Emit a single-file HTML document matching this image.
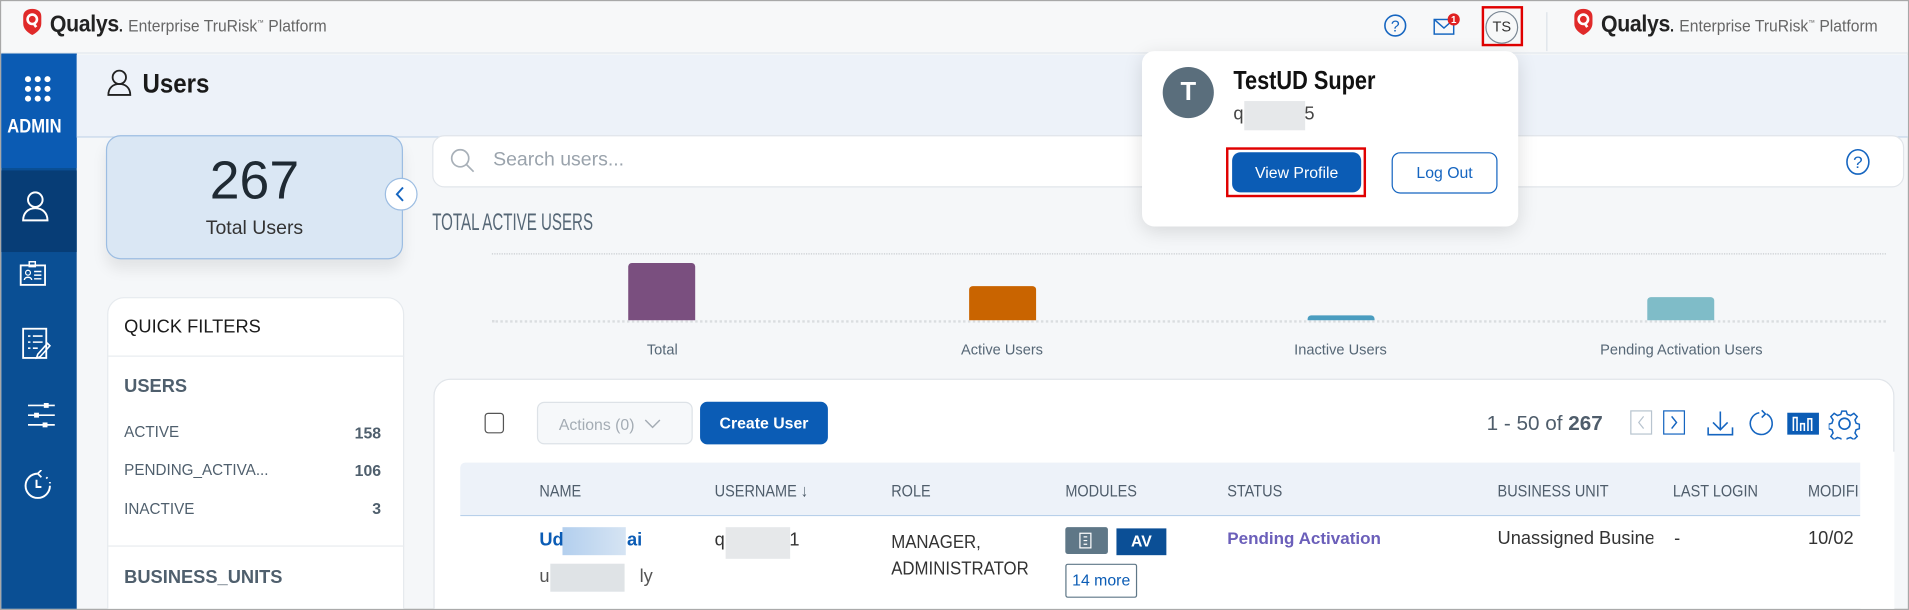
<!DOCTYPE html>
<html><head><meta charset="utf-8"><style>
*{box-sizing:border-box;margin:0;padding:0}
html,body{width:1909px;height:610px;overflow:hidden;background:#f5f7f9}
#s{position:absolute;left:0;top:0;width:1568px;height:501px;transform:scale(1.2175);transform-origin:0 0;font-family:"Liberation Sans",sans-serif;background:#f5f7f9;border:1px solid #a8a8a8;overflow:hidden}
.a{position:absolute}
.n{display:inline-block;transform:scaleX(.82);transform-origin:0 0;white-space:nowrap}
.logo span{font-weight:normal;font-size:14px;color:#666;letter-spacing:0}
.side svg{position:absolute}
.th{position:absolute;top:394px;font-size:14px;color:#4f5d6b}
</style></head><body><div id="s">
<!-- top bar -->
<div class="a" style="left:0;top:0;width:1568px;height:43px;background:#f7f8f9;border-bottom:1px solid #e3e8ee"></div>
<svg class="a" style="left:18px;top:6px" width="15" height="22" viewBox="0 0 14 20"><path d="M7 0C3 0 0 2 0 6v5c0 4 3 7 7 9 4-2 7-5 7-9V6c0-4-3-6-7-6z" fill="#e02a2a"/><circle cx="7" cy="8" r="3.6" fill="none" stroke="#fff" stroke-width="2"/><path d="M8 11l2 3" stroke="#fff" stroke-width="2"/></svg>
<div class="a logo" style="left:40px;top:9px"><span class="n" style="transform:scaleX(.92);font-size:19px;font-weight:bold;color:#222;letter-spacing:-.3px">Qualys<b style="font-size:13px">.</b> <span>Enterprise TruRisk<sup style="font-size:6px">™</sup> Platform</span></span></div>
<svg class="a" style="left:1135px;top:10px" width="20" height="20"><circle cx="10" cy="10" r="8.5" fill="none" stroke="#1565c0" stroke-width="1.3"/><text x="10" y="15" font-size="13" fill="#1565c0" text-anchor="middle" font-family="Liberation Sans">?</text></svg>
<svg class="a" style="left:1176px;top:9px" width="24" height="22"><rect x="1" y="6" width="16" height="12" fill="none" stroke="#1565c0" stroke-width="1.2"/><path d="M1 6l8 7 8-7" fill="none" stroke="#1565c0" stroke-width="1.2"/><circle cx="17" cy="6" r="5" fill="#e02020"/><text x="17" y="9" font-size="8" font-weight="bold" fill="#fff" text-anchor="middle" font-family="Liberation Sans">1</text></svg>
<div class="a" style="left:1216px;top:4px;width:34px;height:33px;border:2px solid #e00000"></div>
<div class="a" style="left:1219px;top:8px;width:27px;height:27px;border:1px solid #7a8794;border-radius:50%;font-size:12px;text-align:center;line-height:25px;color:#333">TS</div>
<div class="a" style="left:1269px;top:9px;width:1px;height:32px;background:#dde2e8"></div>
<svg class="a" style="left:1292px;top:6px" width="15" height="22" viewBox="0 0 14 20"><path d="M7 0C3 0 0 2 0 6v5c0 4 3 7 7 9 4-2 7-5 7-9V6c0-4-3-6-7-6z" fill="#e02a2a"/><circle cx="7" cy="8" r="3.6" fill="none" stroke="#fff" stroke-width="2"/><path d="M8 11l2 3" stroke="#fff" stroke-width="2"/></svg>
<div class="a logo" style="left:1314px;top:9px"><span class="n" style="transform:scaleX(.92);font-size:19px;font-weight:bold;color:#222;letter-spacing:-.3px">Qualys<b style="font-size:13px">.</b> <span>Enterprise TruRisk<sup style="font-size:6px">™</sup> Platform</span></span></div>
<!-- sidebar -->
<div class="a side" style="left:0;top:43px;width:62px;height:458px;background:#0a4f94">
 <div class="a" style="left:0;top:0;width:62px;height:94px;background:#0b5bb3"></div>
 <div class="a" style="left:0;top:96px;width:62px;height:67px;background:#073d76"></div>
 <svg style="left:19px;top:18px" width="22" height="22"><g fill="#fff"><circle cx="3" cy="3" r="2.5"/><circle cx="11" cy="3" r="2.5"/><circle cx="19" cy="3" r="2.5"/><circle cx="3" cy="11" r="2.5"/><circle cx="11" cy="11" r="2.5"/><circle cx="19" cy="11" r="2.5"/><circle cx="3" cy="19" r="2.5"/><circle cx="19" cy="19" r="2.5"/><circle cx="11" cy="19" r="2.5"/></g></svg>
 <div class="a" style="left:5px;top:52px;font-size:16px;font-weight:bold;color:#fff"><span class="n" style="transform:scaleX(.85)">ADMIN</span></div>
 <svg style="left:17px;top:113px" width="22" height="26"><circle cx="11" cy="7" r="6" fill="none" stroke="#fff" stroke-width="1.6"/><path d="M1 24c0-6 4-10 10-10s10 4 10 10z" fill="none" stroke="#fff" stroke-width="1.6"/></svg>
 <svg style="left:15px;top:170px" width="22" height="22"><rect x="1" y="4" width="20" height="16" fill="none" stroke="#fff" stroke-width="1.5"/><rect x="8" y="1" width="5" height="4" fill="none" stroke="#fff" stroke-width="1.2"/><circle cx="7" cy="10" r="2" fill="none" stroke="#fff"/><path d="M4 16c0-3 6-3 6 0M12 9h6M12 12h6M12 15h6" stroke="#fff" fill="none" stroke-width="1.2"/></svg>
 <svg style="left:17px;top:225px" width="24" height="28"><rect x="1" y="1" width="19" height="24" fill="none" stroke="#fff" stroke-width="1.5"/><path d="M5 7h2M9 7h8M5 12h2M9 12h8M5 17h2M9 17h4M13 22l8-9 2 2-8 9-3 1z" stroke="#fff" fill="none" stroke-width="1.3"/></svg>
 <svg style="left:17px;top:287px" width="28" height="22"><path d="M5 2h22M5 10h22M5 18h22" stroke="#fff" stroke-width="1.4"/><rect x="18" y="0" width="4" height="4" fill="#fff"/><rect x="10" y="8" width="4" height="4" fill="#fff"/><rect x="17" y="16" width="4" height="4" fill="#fff"/></svg>
 <svg style="left:17px;top:342px" width="26" height="26"><path d="M13 3a10 10 0 1 0 10 10" fill="none" stroke="#fff" stroke-width="1.6"/><path d="M13 3l3-3M13 3l3 3" stroke="#fff" stroke-width="1.4" fill="none"/><path d="M12 8v6h4" stroke="#fff" stroke-width="1.6" fill="none"/><path d="M20 6l1 1M23 10v1" stroke="#fff" stroke-width="1.6"/></svg>
</div>
<!-- header band -->
<div class="a" style="left:62px;top:44px;width:1506px;height:68px;background:#edf2f9;border-bottom:1px solid #c6d7ea"></div>
<svg class="a" style="left:87px;top:56px" width="20" height="22"><circle cx="10" cy="6.5" r="5.5" fill="none" stroke="#222" stroke-width="1.5"/><path d="M1 21c0-6 4-9 9-9s9 3 9 9z" fill="none" stroke="#222" stroke-width="1.5"/></svg>
<div class="a" style="left:116px;top:55px;font-size:22px;font-weight:bold;color:#1a1a1a"><span class="n" style="transform:scaleX(.9)">Users</span></div>
<!-- total card -->
<div class="a" style="left:86px;top:110px;width:244px;height:102px;background:#dae7f4;border:1px solid #9cbde2;border-radius:12px;box-shadow:0 8px 12px rgba(0,0,0,.08)"></div>
<div class="a" style="left:86px;top:123px;width:244px;text-align:center;font-size:44px;color:#1f2a33">267</div>
<div class="a" style="left:86px;top:178px;width:244px;text-align:center;font-size:16px;color:#333">Total Users</div>
<div class="a" style="left:315px;top:145px;width:27px;height:27px;border-radius:50%;background:#fff;border:1px solid #9cbde2"></div>
<svg class="a" style="left:323px;top:151px" width="10" height="15"><path d="M7 2L2 7.5 7 13" stroke="#1565c0" stroke-width="1.6" fill="none"/></svg>
<!-- quick filters -->
<div class="a" style="left:87px;top:243px;width:244px;height:270px;background:#fff;border:1px solid #e6eaee;border-radius:14px"></div>
<div class="a" style="left:87px;top:291px;width:244px;height:1px;background:#e8ecef"></div>
<div class="a" style="left:87px;top:447px;width:244px;height:1px;background:#e8ecef"></div>
<div class="a" style="left:101px;top:259px;font-size:15px;color:#1a1a1a">QUICK FILTERS</div>
<div class="a" style="left:101px;top:308px;font-size:15px;color:#4f5f6d;font-weight:bold">USERS</div>
<div class="a" style="left:101px;top:347px;font-size:12.5px;color:#4f5f6d">ACTIVE</div>
<div class="a" style="left:101px;top:378px;font-size:12.5px;color:#4f5f6d">PENDING_ACTIVA...</div>
<div class="a" style="left:101px;top:410px;font-size:12.5px;color:#4f5f6d">INACTIVE</div>
<div class="a" style="left:260px;top:347px;width:52px;text-align:right;font-size:13px;font-weight:bold;color:#4f5f6d;line-height:15px">158<br><span style="display:block;margin-top:16px">106</span><span style="display:block;margin-top:16px">3</span></div>
<div class="a" style="left:101px;top:465px;font-size:15px;color:#4f5f6d;font-weight:bold">BUSINESS_UNITS</div>
<!-- search -->
<div class="a" style="left:354px;top:110px;width:1209px;height:43px;background:#fff;border:1px solid #e1e5ea;border-radius:10px"></div>
<svg class="a" style="left:368px;top:120px" width="22" height="22"><circle cx="9" cy="9" r="7" fill="none" stroke="#a8b0b8" stroke-width="1.4"/><path d="M14 14l6 6" stroke="#a8b0b8" stroke-width="1.4"/></svg>
<div class="a" style="left:404px;top:122px;font-size:16px;color:#9aa3ac">Search users...</div>
<svg class="a" style="left:1514px;top:120px" width="22" height="24"><ellipse cx="11" cy="12" rx="9" ry="10" fill="none" stroke="#1565c0" stroke-width="1.3"/><text x="11" y="17" font-size="14" fill="#1565c0" text-anchor="middle" font-family="Liberation Sans">?</text></svg>
<!-- chart -->
<div class="a" style="left:354px;top:171px;font-size:20px;color:#566776"><span class="n" style="transform:scaleX(.62)">TOTAL ACTIVE USERS</span></div>
<div class="a" style="left:403px;top:207px;width:1145px;border-top:1px dotted #c8ccd0"></div>
<div class="a" style="left:403px;top:262px;width:1145px;border-top:2px dotted #dadde0"></div>
<div class="a" style="left:515px;top:215px;width:55px;height:47px;background:#7a4f7f;border-radius:3px 3px 0 0"></div>
<div class="a" style="left:795px;top:234px;width:55px;height:28px;background:#c96400;border-radius:3px 3px 0 0"></div>
<div class="a" style="left:1073px;top:258px;width:55px;height:4px;background:#4a9dc0;border-radius:3px 3px 0 0"></div>
<div class="a" style="left:1352px;top:243px;width:55px;height:19px;background:#7fbcc8;border-radius:3px 3px 0 0"></div>
<div class="a" style="left:443px;top:279px;width:200px;text-align:center;font-size:12px;color:#566776">Total</div>
<div class="a" style="left:722px;top:279px;width:200px;text-align:center;font-size:12px;color:#566776">Active Users</div>
<div class="a" style="left:1000px;top:279px;width:200px;text-align:center;font-size:12px;color:#566776">Inactive Users</div>
<div class="a" style="left:1280px;top:279px;width:200px;text-align:center;font-size:12px;color:#566776">Pending Activation Users</div>
<!-- table card -->
<div class="a" style="left:355px;top:310px;width:1200px;height:210px;background:#fff;border:1px solid #e1e5ea;border-radius:14px"></div>
<div class="a" style="left:397px;top:338px;width:16px;height:17px;border:1.3px solid #555;border-radius:3px"></div>
<div class="a" style="left:440px;top:329px;width:128px;height:35px;border:1px solid #dde2e7;border-radius:6px;background:#f6f8fa;font-size:13px;color:#a4acb4;padding:10px 0 0 17px">Actions (0) <svg width="14" height="9" style="margin-left:4px"><path d="M1 1l6 6 6-6" stroke="#a4acb4" fill="none" stroke-width="1.2"/></svg></div>
<div class="a" style="left:574px;top:329px;width:105px;height:35px;background:#0b5cb5;border-radius:6px;color:#fff;font-size:13px;font-weight:bold;text-align:center;line-height:35px">Create User</div>
<div class="a" style="left:1220px;top:337px;font-size:17px;color:#4f5d6b">1 - 50 of <b>267</b></div>
<div class="a" style="left:1338px;top:336px;width:18px;height:20px;border:1px solid #b8c4cf"></div>
<svg class="a" style="left:1342px;top:340px" width="10" height="12"><path d="M7 1L3 6l4 5" stroke="#b8c4cf" fill="none"/></svg>
<div class="a" style="left:1365px;top:336px;width:18px;height:20px;border:1px solid #1565c0"></div>
<svg class="a" style="left:1369px;top:340px" width="10" height="12"><path d="M3 1l4 5-4 5" stroke="#1565c0" fill="none" stroke-width="1.2"/></svg>
<svg class="a" style="left:1400px;top:336px" width="24" height="22"><path d="M12 1v14M6 10l6 6 6-6M2 14v6h20v-6" stroke="#1565c0" fill="none" stroke-width="1.3"/></svg>
<svg class="a" style="left:1434px;top:335px" width="22" height="24"><path d="M16 4a9 9 0 1 1-6-1" stroke="#1565c0" fill="none" stroke-width="1.3"/><path d="M12 1l3 3-3 3" stroke="#1565c0" fill="none" stroke-width="1.3"/></svg>
<div class="a" style="left:1467px;top:338px;width:26px;height:18px;background:#0b5cb5"></div>
<svg class="a" style="left:1467px;top:338px" width="26" height="18"><path d="M5 15V4h3v11M11 15V9h3v6M17 15V5h3v10" stroke="#fff" fill="none" stroke-width="1.3"/></svg>
<svg class="a" style="left:1501px;top:334px" width="26" height="26" viewBox="0 0 26 26"><path d="M11 2h4l1 3 3 1 3-2 3 3-2 3 1 3 3 1v4l-3 1-1 3 2 3-3 3-3-2-3 1-1 3h-4l-1-3-3-1-3 2-3-3 2-3-1-3-3-1v-4l3-1 1-3-2-3 3-3 3 2 3-1z" transform="scale(.9) translate(1 1)" fill="none" stroke="#1565c0" stroke-width="1.4"/><circle cx="13" cy="13" r="4.5" fill="none" stroke="#1565c0" stroke-width="1.4"/></svg>
<!-- table header -->
<div class="a" style="left:377px;top:379px;width:1150px;height:44px;background:#edf2f9;border-bottom:1px solid #b8d0ea;border-radius:4px 0 0 0"></div>
<div class="th" style="left:442px"><span class="n" style="transform:scaleX(.85)">NAME</span></div>
<div class="th" style="left:586px"><span class="n" style="transform:scaleX(.85)">USERNAME ↓</span></div>
<div class="th" style="left:731px"><span class="n" style="transform:scaleX(.85)">ROLE</span></div>
<div class="th" style="left:874px"><span class="n" style="transform:scaleX(.85)">MODULES</span></div>
<div class="th" style="left:1007px"><span class="n" style="transform:scaleX(.85)">STATUS</span></div>
<div class="th" style="left:1229px"><span class="n" style="transform:scaleX(.85)">BUSINESS UNIT</span></div>
<div class="th" style="left:1373px"><span class="n" style="transform:scaleX(.85)">LAST LOGIN</span></div>
<div class="th" style="left:1484px"><span class="n" style="transform:scaleX(.85)">MODIFI</span></div>
<div class="a" style="left:1527px;top:370px;width:28px;height:140px;background:#fff"></div>
<!-- row -->
<div class="a" style="left:442px;top:434px;font-size:15px;font-weight:bold;color:#0b5cb5">Ud<span style="display:inline-block;width:52px"></span>ai</div>
<div class="a" style="left:461px;top:432px;width:52px;height:23px;background:linear-gradient(90deg,#b3cfee,#d6e4f3)"></div>
<div class="a" style="left:442px;top:464px;font-size:15px;color:#555">u<span style="display:inline-block;width:74px"></span>ly</div>
<div class="a" style="left:451px;top:462px;width:61px;height:23px;background:#dfe3e6"></div>
<div class="a" style="left:586px;top:434px;font-size:15px;color:#333">q<span style="display:inline-block;width:53px"></span>1</div>
<div class="a" style="left:595px;top:432px;width:53px;height:26px;background:#e6e8ea"></div>
<div class="a" style="left:731px;top:434px;font-size:15px;color:#333;line-height:22px"><span class="n" style="transform:scaleX(.92)">MANAGER,<br>ADMINISTRATOR</span></div>
<div class="a" style="left:874px;top:432px;width:35px;height:22px;background:#5f7787;border-radius:2px"></div>
<svg class="a" style="left:885px;top:436px" width="12" height="14"><rect x="1" y="1" width="9" height="12" fill="none" stroke="#fff"/><path d="M4 4h3M4 7h3M4 10h3" stroke="#fff"/></svg>
<div class="a" style="left:916px;top:433px;width:41px;height:22px;background:#0b4f96;color:#fff;font-size:13px;font-weight:bold;text-align:center;line-height:22px">AV</div>
<div class="a" style="left:874px;top:462px;width:59px;height:28px;border:1px solid #5f7787;border-radius:2px;font-size:13px;color:#0b5cb5;text-align:center;line-height:26px">14 more</div>
<div class="a" style="left:1007px;top:433px;font-size:14px;font-weight:bold;color:#6b5fba">Pending Activation</div>
<div class="a" style="left:1229px;top:433px;font-size:15px;color:#333;width:128px;overflow:hidden;white-space:nowrap">Unassigned Business</div>
<div class="a" style="left:1374px;top:433px;font-size:15px;color:#333">-</div>
<div class="a" style="left:1484px;top:433px;font-size:15px;color:#333;width:43px;overflow:hidden">10/02</div>
<!-- popup -->
<div class="a" style="left:937px;top:41px;width:309px;height:144px;background:#fff;border-radius:10px;box-shadow:0 4px 16px rgba(0,0,0,.13)"></div>
<div class="a" style="left:954px;top:54px;width:42px;height:42px;border-radius:50%;background:#5a6e7c;color:#fff;font-size:21px;font-weight:bold;text-align:center;line-height:42px">T</div>
<div class="a" style="left:1012px;top:54px;font-size:21px;font-weight:bold;color:#111"><span class="n" style="transform:scaleX(.85)">TestUD Super</span></div>
<div class="a" style="left:1012px;top:84px;font-size:15px;color:#444">q<span style="display:inline-block;width:50px"></span>5</div>
<div class="a" style="left:1021px;top:82px;width:50px;height:24px;background:#e6e8ea"></div>
<div class="a" style="left:1006px;top:120px;width:115px;height:41px;border:2px solid #e00000"></div>
<div class="a" style="left:1011px;top:124px;width:106px;height:33px;background:#0b5cb5;border-radius:7px;color:#fff;font-size:13px;text-align:center;line-height:33px">View Profile</div>
<div class="a" style="left:1142px;top:124px;width:87px;height:34px;border:1px solid #1565c0;border-radius:7px;color:#1565c0;font-size:13px;text-align:center;line-height:32px">Log Out</div>
</div></body></html>
